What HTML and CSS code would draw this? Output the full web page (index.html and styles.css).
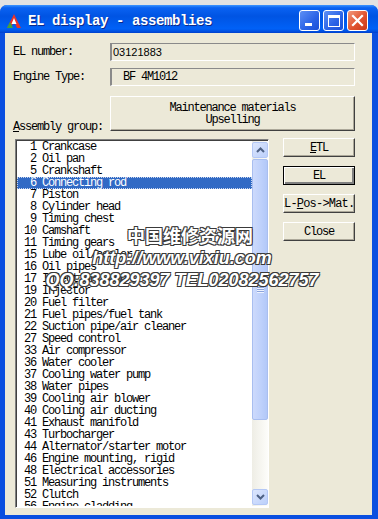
FILE: index.html
```html
<!DOCTYPE html>
<html lang="en">
<head>
    <meta charset="UTF-8">
    <title>EL display - assemblies</title>
    <link rel="stylesheet" href="styles.css">
</head>
<body>
    <div class="window">
        <div class="titlebar">
            <svg class="app-icon" width="16" height="16" viewBox="0 0 16 16">
                <polygon points="8,1 15,15 11,15 8,8 5,15 1,15" fill="#e8322a"/>
                <polygon points="8,5 10.5,11 5.5,11" fill="#fff"/>
                <polygon points="1,15 4,9 7,15" fill="#3aa640"/>
            </svg>
            <span class="title">EL display - assemblies</span>
            <div class="title-buttons">
                <span class="tb tb-min"><i></i></span>
                <span class="tb tb-max"><i></i></span>
                <span class="tb tb-close">
                    <svg width="13" height="13" viewBox="0 0 13 13"><path d="M2 2 L11 11 M11 2 L2 11" stroke="#fff" stroke-width="2.2" stroke-linecap="square"/></svg>
                </span>
            </div>
        </div>

        <div class="client">
            <div class="field-row">
                <span class="label">EL number:</span>
                <div class="field field-sans">03121883</div>
            </div>
            <div class="field-row">
                <span class="label">Engine Type:</span>
                <div class="field field-engine">BF 4M1012</div>
            </div>
            <div class="field-row group-row">
                <span class="label group-label"><u>A</u>ssembly group:</span>
                <button class="btn group-btn">Maintenance materials<br>Upselling</button>
            </div>

            <div class="main">
                <div class="listbox">
                    <ul class="items">
                        <li> 1 Crankcase</li>
                        <li> 2 Oil pan</li>
                        <li> 5 Crankshaft</li>
                        <li class="selected"> 6 Connecting rod</li>
                        <li> 7 Piston</li>
                        <li> 8 Cylinder head</li>
                        <li> 9 Timing chest</li>
                        <li>10 Camshaft</li>
                        <li>11 Timing gears</li>
                        <li>15 Lube oil/cooler</li>
                        <li>16 Oil pipes</li>
                        <li>17 Injection pump</li>
                        <li>19 Injector</li>
                        <li>20 Fuel filter</li>
                        <li>21 Fuel pipes/fuel tank</li>
                        <li>22 Suction pipe/air cleaner</li>
                        <li>27 Speed control</li>
                        <li>33 Air compressor</li>
                        <li>36 Water cooler</li>
                        <li>37 Cooling water pump</li>
                        <li>38 Water pipes</li>
                        <li>39 Cooling air blower</li>
                        <li>40 Cooling air ducting</li>
                        <li>41 Exhaust manifold</li>
                        <li>43 Turbocharger</li>
                        <li>44 Alternator/starter motor</li>
                        <li>46 Engine mounting, rigid</li>
                        <li>48 Electrical accessories</li>
                        <li>51 Measuring instruments</li>
                        <li>52 Clutch</li>
                        <li>56 Engine cladding</li>
                    </ul>
                    <div class="scrollbar">
                        <div class="sb-btn">
                            <svg width="9" height="6" viewBox="0 0 9 6"><path d="M1 5 L4.5 1.5 L8 5" fill="none" stroke="#4d6185" stroke-width="2"/></svg>
                        </div>
                        <div class="sb-thumb"><span class="grip"></span></div>
                        <div class="sb-track"></div>
                        <div class="sb-btn">
                            <svg width="9" height="6" viewBox="0 0 9 6"><path d="M1 1 L4.5 4.5 L8 1" fill="none" stroke="#4d6185" stroke-width="2"/></svg>
                        </div>
                    </div>
                </div>

                <div class="actions">
                    <button class="btn action"><u>E</u>TL</button>
                    <button class="btn action default">EL</button>
                    <button class="btn action"><span class="clip">EL-<u>P</u>os-&gt;Mat.</span></button>
                    <button class="btn action">Close</button>
                </div>
            </div>
        </div>

        <div class="watermark">
            <div class="wm-cn">中国维修资源网</div>
            <div class="wm-line">http://www.vixiu.com</div>
            <div class="wm-line">QQ:838829397 TEL02082562757</div>
        </div>
    </div>
</body>
</html>
```

FILE: styles.css
```css
body {
    margin: 0;
    background: #e2e2e2;
    font-family: "Liberation Mono", monospace;
    font-size: 12px;
    letter-spacing: -1.2px;
    color: #000;
}
.window {
    position: relative;
    margin-top: 5px;
    height: 514px;
    background: #0a4fe0;
    border-radius: 7px 7px 0 0;
    display: flex;
    flex-direction: column;
    overflow: hidden;
}
.titlebar {
    height: 28px;
    box-sizing: border-box;
    padding: 3px 10px 0 6px;
    display: flex;
    align-items: center;
    background: linear-gradient(#3d95ff 0, #0a62f2 10%, #0054e3 40%, #0061f7 85%, #0050e0 94%, #003fcc 100%);
}
.app-icon {
    flex: none;
}
.title {
    margin-left: 6px;
    font-size: 14px;
    font-weight: bold;
    letter-spacing: -0.4px;
    color: #fff;
    text-shadow: 1px 1px 0 #0a2a8a;
    white-space: pre;
}
.title-buttons {
    margin-left: auto;
    display: flex;
    gap: 3px;
}
.tb {
    width: 19px;
    height: 19px;
    border: 1px solid #fff;
    border-radius: 3px;
    display: flex;
    align-items: center;
    justify-content: center;
    background: linear-gradient(135deg, #5d8ff5, #2a62e6 60%, #1a4fd6);
}
.tb-min i {
    width: 7px;
    height: 3px;
    background: #fff;
    margin-top: 8px;
    margin-right: 3px;
}
.tb-max i {
    width: 10px;
    height: 8px;
    border: 1px solid #fff;
    border-top-width: 3px;
}
.tb-close {
    background: linear-gradient(135deg, #f29a7c, #e0532f 55%, #c9391a);
}
.client {
    flex: 1;
    margin: 0 6px 4px 5px;
    background: #ece9d8;
    padding: 10px 17px 0 8px;
    display: flex;
    flex-direction: column;
}
.field-row {
    display: flex;
    align-items: center;
    margin-bottom: 7px;
}
.label {
    width: 97px;
    flex: none;
    white-space: pre;
}
.field {
    flex: 1;
    height: 18px;
    box-sizing: border-box;
    border-top: 1px solid #8a8a8a;
    border-left: 2px solid #8a8a8a;
    border-right: 1px solid #fff;
    border-bottom: 1px solid #fff;
    line-height: 16px;
    white-space: pre;
}
.field-sans {
    font-family: "Liberation Sans", Arial, sans-serif;
    font-size: 11px;
    letter-spacing: 0;
    padding-left: 1px;
}
.field-engine {
    padding-left: 11px;
}
.group-row {
    margin-top: 3px;
    align-items: flex-end;
    margin-bottom: 8px;
}
.group-label {
    margin-bottom: -3px;
}
.btn {
    font-family: inherit;
    font-size: inherit;
    letter-spacing: inherit;
    color: #000;
    background: #ece9d8;
    border: 1px solid;
    border-color: #fff #404040 #404040 #fff;
    box-shadow: inset -1px -1px 0 #aca899;
    padding: 0;
    line-height: 12px;
    white-space: pre;
}
.group-btn {
    flex: 1;
    height: 35px;
}
.main {
    display: flex;
    align-items: flex-start;
    margin-left: 2px;
}
.listbox {
    width: 255px;
    height: 369px;
    box-sizing: border-box;
    border: 1px solid;
    border-color: #808080 #fff #fff #808080;
    box-shadow: inset 1px 1px 0 #404040;
    background: #fff;
    display: flex;
    padding: 1px 0 1px 1px;
}
.items {
    list-style: none;
    margin: 0;
    padding: 0;
    flex: 1;
    overflow: hidden;
}
.items li {
    height: 12px;
    line-height: 12px;
    padding-left: 7px;
    white-space: pre;
}
.items li.selected {
    background: #316ac5;
    color: #fff;
    outline: 1px dotted #c9d6ee;
    outline-offset: -1px;
}
.scrollbar {
    width: 16px;
    flex: none;
    display: flex;
    flex-direction: column;
    background: linear-gradient(to right, #eeede5, #fdfdfa);
}
.sb-btn {
    height: 14px;
    margin: 1px 0;
    border: 1px solid #b4c8f6;
    border-radius: 2px;
    background: linear-gradient(135deg, #dce6fd, #bcd0fb);
    display: flex;
    align-items: center;
    justify-content: center;
}
.sb-thumb {
    height: 259px;
    border: 1px solid #a8bef0;
    border-radius: 2px;
    background: linear-gradient(to right, #cddafc, #bdd0fb 60%, #b2c8f8);
    display: flex;
    align-items: center;
    justify-content: center;
}
.grip {
    width: 7px;
    height: 7px;
    background: repeating-linear-gradient(#eef3fe 0 1px, #8ca4dc 1px 2px);
}
.sb-track {
    flex: 1;
}
.actions {
    margin-left: 14px;
    margin-top: -1px;
    display: flex;
    flex-direction: column;
    gap: 9px;
}
.action {
    width: 72px;
    height: 19px;
    overflow: hidden;
    display: flex;
    align-items: center;
    justify-content: center;
}
.action.default {
    outline: 1px solid #000;
    outline-offset: -1px;
    border-color: #fff #404040 #404040 #fff;
    box-shadow: inset 1px 1px 0 #fff, inset -2px -2px 0 #808080;
}
.clip {
    flex: none;
    letter-spacing: -0.8px;
    margin-right: 6px;
}
.watermark {
    position: absolute;
    left: 40px;
    top: 219px;
    width: 300px;
    text-align: center;
    color: #fff;
    font-family: "Liberation Sans", Arial, sans-serif;
    font-weight: bold;
    font-size: 18px;
    letter-spacing: 0;
    line-height: 22.5px;
    text-shadow: 1px 1px 0 #3a3a3a, -1px -1px 0 #3a3a3a, 1px -1px 0 #3a3a3a, -1px 1px 0 #3a3a3a, 0 1px 0 #3a3a3a, 0 -1px 0 #3a3a3a;
    pointer-events: none;
}
.wm-line {
    font-style: italic;
    padding-right: 16px;
}
.wm-cn {
    font-family: "Noto Sans CJK SC", sans-serif;
}
```
